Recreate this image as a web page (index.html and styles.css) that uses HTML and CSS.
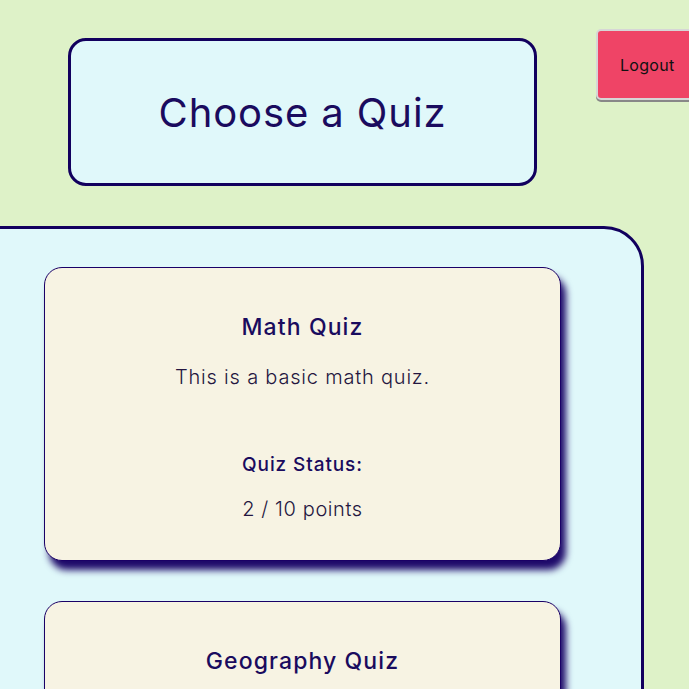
FILE: index.html
```html
<!DOCTYPE html>
<html>
<head>
<meta charset="utf-8">
<link rel="stylesheet" href="styles.css">
</head>
<body>
<div class="top">
  <div class="title-box"><h1>Choose a Quiz</h1></div>
  <button class="logout">Logout</button>
</div>
<main class="panel">
  <section class="card">
    <h2>Math Quiz</h2>
    <p class="desc">This is a basic math quiz.</p>
    <h3>Quiz Status:</h3>
    <p class="score">2 / 10 points</p>
  </section>
  <section class="card">
    <h2>Geography Quiz</h2>
    <p class="desc">Test your knowledge of world geography.</p>
    <h3>Quiz Status:</h3>
    <p class="score">0 / 10 points</p>
  </section>
</main>
</body>
</html>
```
FILE: styles.css
```css
html, body {
  margin: 0;
  padding: 0;
  background: #def2c8;
  font-family: "Inter", "Noto Sans", sans-serif;
  color: #1a0b5e;
  overflow: hidden;
}
.top {
  display: flex;
  align-items: flex-start;
  padding-left: 68px;
}
.title-box {
  box-sizing: border-box;
  flex-shrink: 0;
  margin-top: 38px;
  width: 469px;
  height: 148px;
  border: 3px solid #12005e;
  border-radius: 18px;
  background: #e0f8fa;
  display: flex;
  align-items: center;
  justify-content: center;
}
.title-box h1 {
  margin: 0;
  font-size: 40px;
  font-weight: 400;
  letter-spacing: 0.9px;
  color: #1a0b5e;
}
.logout {
  box-sizing: border-box;
  margin-top: 29px;
  margin-left: 59px;
  width: 110px;
  height: 71px;
  flex-shrink: 0;
  padding: 0 0 0 22px;
  text-align: left;
  background: #ef4466;
  border: 2px solid #d6d6d6;
  border-radius: 5px;
  box-shadow: 0 2px 0 #888;
  font-family: inherit;
  font-size: 16px;
  letter-spacing: 0.3px;
  color: #111;
}
.panel {
  box-sizing: border-box;
  margin: 40px 0 0 -40px;
  width: 684px;
  padding: 38px 81px 40px;
  border: 3px solid #12005e;
  border-radius: 0 40px 0 0;
  background: #e0f8fa;
  display: flex;
  flex-direction: column;
  gap: 40px;
}
.card {
  box-sizing: border-box;
  width: 517px;
  height: 294px;
  flex-shrink: 0;
  background: #f7f3e3;
  border: 1px solid #1a0066;
  border-radius: 18px;
  box-shadow: 5px 9px 7px #1e0a6a;
  text-align: center;
  padding-top: 45px;
}
.card h2 {
  margin: 0;
  font-size: 23px;
  font-weight: 500;
  line-height: 28px;
  letter-spacing: 1.1px;
  color: #1a0b5e;
}
.card .desc {
  margin: 24px 0 0;
  font-size: 20px;
  font-weight: 300;
  line-height: 24px;
  letter-spacing: 0.8px;
  color: #241640;
}
.card h3 {
  margin: 64px 0 0;
  font-size: 19px;
  font-weight: 500;
  line-height: 24px;
  letter-spacing: 0.9px;
  color: #1a0b5e;
}
.card .score {
  margin: 20px 0 0;
  font-size: 20px;
  font-weight: 300;
  line-height: 24px;
  letter-spacing: 0.6px;
  color: #241640;
}
```
